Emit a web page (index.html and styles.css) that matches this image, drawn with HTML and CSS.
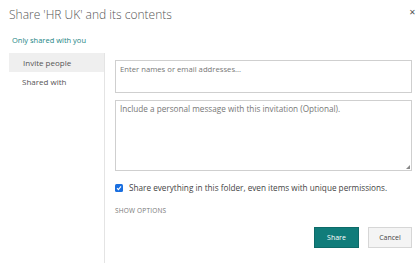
FILE: index.html
```html
<!DOCTYPE html>
<html>
<head>
    <title>Share</title>
    <link rel="stylesheet" href="styles.css">
</head>
<body>
    <div class="dialog">
        <div class="dialog-header">
            <h1>Share 'HR UK' and its contents</h1>
            <button class="close-btn">&#10005;</button>
        </div>
        <a class="shared-link">Only shared with you</a>

        <div class="dialog-body">
            <div class="side-nav">
                <div class="nav-item active">Invite people</div>
                <div class="nav-item">Shared with</div>
            </div>

            <div class="invite-pane">
                <div class="people-input">Enter names or email addresses...</div>
                <div class="message-input">
                    Include a personal message with this invitation (Optional).
                    <span class="resize-grip"></span>
                </div>
                <label class="share-all">
                    <span class="checkbox">
                        <svg width="6" height="6" viewBox="0 0 6 6"><path d="M1 3.2 L2.4 4.6 L5 1.4" fill="none" stroke="#fff" stroke-width="1.1"/></svg>
                    </span>
                    Share everything in this folder, even items with unique permissions.
                </label>
                <div class="show-options">SHOW OPTIONS</div>
                <div class="actions">
                    <button class="btn primary">Share</button>
                    <button class="btn">Cancel</button>
                </div>
            </div>
        </div>
    </div>
</body>
</html>
```

FILE: styles.css
```css
* {
    margin: 0;
    padding: 0;
    box-sizing: border-box;
}

body {
    background: #fff;
    color: #333;
    font-family: 'Open Sans', 'Segoe UI', sans-serif;
    width: 419px;
    height: 263px;
    overflow: hidden;
}

.dialog {
    height: 100%;
    padding: 6px 0 0 9px;
    display: flex;
    flex-direction: column;
}

.dialog-header {
    display: flex;
    justify-content: space-between;
    align-items: flex-start;
    padding-right: 3px;
}

h1 {
    font-family: 'Open Sans', 'Segoe UI', sans-serif;
    font-size: 12px;
    font-weight: 300;
    color: #555;
    line-height: 18px;
}

.close-btn {
    background: none;
    border: none;
    color: #555;
    font-size: 8px;
    line-height: 8px;
    margin-top: 3px;
    width: 8px;
}

.shared-link {
    margin: 11px 0 0 3px;
    color: #1a8584;
    font-size: 7.5px;
    line-height: 10px;
}

.dialog-body {
    flex: 1;
    display: flex;
    margin-top: 8px;
}

.side-nav {
    width: 96px;
    border-right: 1px solid #e4e4e4;
}

.nav-item {
    height: 19px;
    line-height: 19px;
    font-size: 8px;
    color: #555;
    padding-left: 13px;
}

.nav-item.active {
    background: #efefef;
    padding-left: 14px;
    width: 95px;
}

.invite-pane {
    flex: 1;
    padding: 7px 7px 0 10px;
    display: flex;
    flex-direction: column;
}

.people-input,
.message-input {
    border: 1px solid #cfcfcf;
    color: #777;
    padding: 3px 4px;
    line-height: 10px;
}

.people-input {
    height: 33px;
    font-size: 7.7px;
}

.message-input {
    height: 71px;
    margin-top: 7px;
    position: relative;
    font-size: 8.2px;
}

.resize-grip {
    position: absolute;
    right: 1px;
    bottom: 1px;
    width: 0;
    height: 0;
    border-left: 4px solid transparent;
    border-bottom: 4px solid #888;
}

.share-all {
    display: flex;
    align-items: center;
    gap: 6px;
    margin-top: 12px;
    font-size: 8.2px;
    color: #444;
    line-height: 10px;
}

.checkbox {
    width: 8px;
    height: 8px;
    background: #1a6fe0;
    border-radius: 1.5px;
    display: inline-flex;
    align-items: center;
    justify-content: center;
}

.show-options {
    margin-top: 13px;
    font-size: 6.5px;
    color: #777;
    letter-spacing: 0.2px;
}

.actions {
    display: flex;
    justify-content: flex-end;
    gap: 9px;
    margin-top: 12px;
}

.btn {
    height: 21px;
    width: 44px;
    font-family: 'Open Sans', 'Segoe UI', sans-serif;
    font-size: 7px;
    color: #444;
    background: #f4f4f4;
    border: 1px solid #d6d6d6;
}

.btn.primary {
    width: 45px;
    background: #107c7a;
    border-color: #0d6a68;
    color: #fff;
}
```
